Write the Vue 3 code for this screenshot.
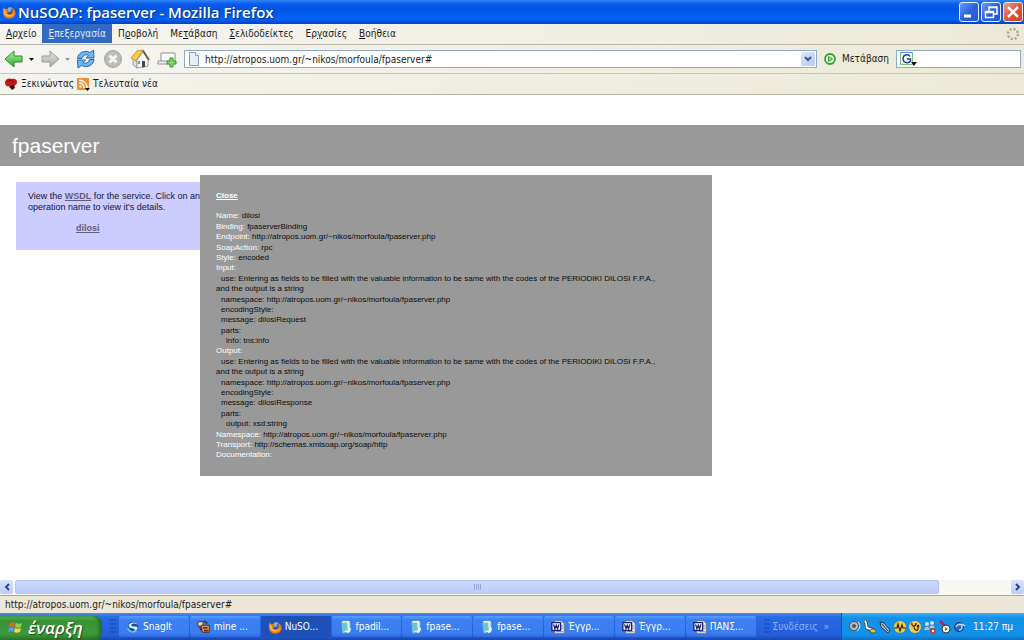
<script setup>
import { ref } from 'vue'

const address = ref('http://atropos.uom.gr/~nikos/morfoula/fpaserver#')
const query = ref('')

const menus = [
  { key: 'Α', rest: 'ρχείο' },
  { key: 'Ε', rest: 'πεξεργασία', active: true },
  { pre: 'Π', key: 'ρ', rest: 'οβολή' },
  { pre: 'Με', key: 'τ', rest: 'άβαση' },
  { key: 'Σ', rest: 'ελιδοδείκτες' },
  { pre: 'Ερ', key: 'γ', rest: 'ασίες' },
  { key: 'Β', rest: 'οήθεια' }
]

const php = 'http://atropos.uom.gr/~nikos/morfoula/fpaserver.php'
const use = 'use: Entering as fields to be filled with the valuable information to be same with the codes of the PERIODIKI DILOSI F.P.A., and the output is a string'
const details = [
  { label: 'Name:', text: 'dilosi' },
  { label: 'Binding:', text: 'fpaserverBinding' },
  { label: 'Endpoint:', text: php },
  { label: 'SoapAction:', text: 'rpc' },
  { label: 'Style:', text: 'encoded' },
  { label: 'Input:' },
  { text: use, level: 1 },
  { text: 'namespace: ' + php, level: 1 },
  { text: 'encodingStyle:', level: 1 },
  { text: 'message: dilosiRequest', level: 1 },
  { text: 'parts:', level: 1 },
  { text: 'info: tns:info', level: 2 },
  { label: 'Output:' },
  { text: use, level: 1 },
  { text: 'namespace: ' + php, level: 1 },
  { text: 'encodingStyle:', level: 1 },
  { text: 'message: dilosiResponse', level: 1 },
  { text: 'parts:', level: 1 },
  { text: 'output: xsd:string', level: 2 },
  { label: 'Namespace:', text: php },
  { label: 'Transport:', text: 'http://schemas.xmlsoap.org/soap/http' },
  { label: 'Documentation:' }
]

const tasks = [
  { name: 'SnagIt', icon: 'snag' },
  { name: 'mine ...', icon: 'mine' },
  { name: 'NuSO...', icon: 'fox', active: true },
  { name: 'fpadil...', icon: 'note' },
  { name: 'fpase...', icon: 'note' },
  { name: 'fpase...', icon: 'note' },
  { name: 'Έγγρ...', icon: 'word' },
  { name: 'Έγγρ...', icon: 'word' },
  { name: 'ΠΑΝΣ...', icon: 'word' }
]
</script>

<template>
  <div class="window">
    <svg class="defs" width="0" height="0" aria-hidden="true">
      <defs>
        <linearGradient id="gGreen" x1="0" y1="0" x2="0" y2="1"><stop offset="0" stop-color="#b6f3a0" /><stop offset="1" stop-color="#2fa52c" /></linearGradient>
        <linearGradient id="gGray" x1="0" y1="0" x2="0" y2="1"><stop offset="0" stop-color="#e2e2de" /><stop offset="1" stop-color="#a9a9a6" /></linearGradient>
        <symbol id="fox" viewBox="0 0 16 16">
          <circle cx="8.500" cy="7.500" r="5.500" fill="#2c4f9e" />
          <path d="M7 3c2-1 4-.5 5 1l-2 1 1 2-3 1-2-2z" fill="#7fb4e6" />
          <path d="M2 2c0 2 .5 2 1.500 2.500C5 4 6 4 7 5L5.500 6.500c1 0 1.500 1 2.500 1.500-1 1.500-2 1-3 .5 1 3 6 3 7-.5.7-2.500-.5-4-1.500-5 3 .5 5 3 5 6 0 4-3.500 6.500-7 6.500-4.500 0-7.500-3-7.500-7C1 6 1 4 2 2z" fill="#ef7c17" />
          <path d="M2 5c-.5 5 2 8.500 6.500 8.500 2.500 0 5-1.500 6-4-2 2-5 3-7.500 1.500C5 10 4 8 4 6z" fill="#f9b83c" />
        </symbol>
        <symbol id="snag" viewBox="0 0 16 16">
          <circle cx="8" cy="8" r="6" fill="#1a4f96" />
          <path d="M3 6c2-4 8-4 10-1-3-1.500-7-1-7 1s5 1 7 2c1 3-3 6-6 6 3-1 4-3 2-4-2-.8-6-.5-6-4z" fill="#dff1ff" />
          <path d="M2 9c1 4 6 6 10 3" fill="none" stroke="#62c2ef" stroke-width="2" />
        </symbol>
        <symbol id="mine" viewBox="0 0 16 16">
          <path d="M1 2h6v5H1z" fill="#f6d4a0" stroke="#3b2a2a" />
          <path d="M5 6h9v8H6z" fill="#e59a4a" stroke="#3b2a2a" />
          <path d="M7 8h5v2H7zM8 11h5v2H8z" fill="#722d1c" />
          <path d="M8 1l4 3M3 8l2 4" stroke="#3b2a2a" stroke-width="1.500" />
        </symbol>
        <symbol id="note" viewBox="0 0 16 16">
          <path d="M3 2l8-1 2 2v11l-9 1z" fill="#c8f0f4" stroke="#4d91b5" />
          <path d="M3 3l6-1 1 9-6 3z" fill="#6ec3cf" />
          <path d="M4 2h8" stroke="#f1f6d0" stroke-width="2" />
          <path d="M11 8l3 2-2 4-3 1z" fill="#e9f8fb" />
        </symbol>
        <symbol id="word" viewBox="0 0 16 16">
          <path d="M4 1h8l3 3v11H4z" fill="#fff" stroke="#777" />
          <path d="M11 6h3M11 8h3M11 10h3M6 13h8" stroke="#8c8cb4" />
          <path d="M1 3h10v9H1z" fill="#fff" stroke="#1d2376" stroke-width="1.500" />
          <path d="M3 5l1.500 5L6 6l1.500 4L9 5" fill="none" stroke="#1d2376" stroke-width="1.500" />
        </symbol>
      </defs>
    </svg>

    <header class="titlebar">
      <svg width="14" height="14"><use href="#fox" /></svg>
      <h1>NuSOAP: fpaserver - Mozilla Firefox</h1>
      <div class="controls">
        <button type="button" aria-label="Minimize">
          <svg viewBox="0 0 18 18"><path d="M4 13h7" stroke="#fff" stroke-width="3" /></svg>
        </button>
        <button type="button" aria-label="Restore">
          <svg viewBox="0 0 18 18" fill="none" stroke="#fff"><path d="M7 8V4h8v7h-3M7 4.500h8" stroke-width="1.500" /><path d="M3.500 8.500h8v6h-8zM3.500 9.500h8" stroke-width="1.500" /></svg>
        </button>
        <button type="button" class="close" aria-label="Close window">
          <svg viewBox="0 0 18 18"><path d="M4 4l10 10M14 4L4 14" stroke="#fff" stroke-width="2.500" /></svg>
        </button>
      </div>
    </header>

    <nav class="menubar">
      <button v-for="m in menus" :key="m.rest" type="button" :class="{ active: m.active }">{{ m.pre }}<u>{{ m.key }}</u>{{ m.rest }}</button>
      <svg class="throbber" width="14" height="14" viewBox="0 0 14 14"><circle cx="7" cy="7" r="5" fill="none" stroke="#aaa9a2" stroke-width="2.500" stroke-dasharray="2.200 1.700" /></svg>
    </nav>

    <div class="toolbar">
      <button type="button" aria-label="Back"><svg width="20" height="20" viewBox="0 0 20 20"><path d="M1 10l9-8v5h8v6h-8v5z" fill="url(#gGreen)" stroke="#2c8a2a" stroke-linejoin="round" /></svg></button>
      <button type="button" class="caret" aria-label="Back history"><svg width="5" height="3" viewBox="0 0 5 3"><path d="M0 0h5L2.500 3z" fill="#111" /></svg></button>
      <button type="button" aria-label="Forward"><svg width="20" height="20" viewBox="0 0 20 20"><path d="M19 10l-9-8v5H2v6h8v5z" fill="url(#gGray)" stroke="#9b9b98" stroke-linejoin="round" /></svg></button>
      <button type="button" class="caret" aria-label="Forward history"><svg width="5" height="3" viewBox="0 0 5 3"><path d="M0 0h5L2.500 3z" fill="#999" /></svg></button>
      <button type="button" aria-label="Reload"><svg width="20" height="20" viewBox="0 0 20 20"><path d="M1.500 9.500C2 4 8 .5 14 3.500L17.500 1l.5 8h-8l2.500-2.500C10 5 7 6 6 9.500z" fill="#6db6ef" stroke="#2368ad" stroke-linejoin="round" /><path d="M18 10.500c-.5 5.500-6.500 9-12.500 6L2 19l-.5-8h8L7 13.500c2.500 1.500 5.500.5 6.500-3z" fill="#6db6ef" stroke="#2368ad" stroke-linejoin="round" /></svg></button>
      <button type="button" aria-label="Stop"><svg width="20" height="20" viewBox="0 0 20 20"><circle cx="10" cy="10" r="8.500" fill="#bcbcb9" stroke="#a4a4a1" /><path d="M6.500 6.500l7 7M13.500 6.500l-7 7" stroke="#f5f5f2" stroke-width="3" /></svg></button>
      <button type="button" aria-label="Home"><svg width="20" height="20" viewBox="0 0 20 20"><path d="M3 10l4 1v8l-4-3z" fill="#d9dde3" stroke="#8a8a86" stroke-width=".8" /><path d="M7 11l6-8 5 8v6l-11 2z" fill="#fafafa" stroke="#8a8a86" stroke-width=".8" /><path d="M1 9l6-7 6-1-7 11z" fill="#fbcd45" stroke="#b8862a" stroke-width=".8" stroke-linejoin="round" /><path d="M13 1.500l6 9.500" stroke="#6e5434" stroke-width="1.600" /><path d="M12 12h3v6l-3 .5z" fill="#3c4a5c" /><path d="M8 12h2v3H8z" fill="#6f9bd0" /></svg></button>
      <button type="button" aria-label="New tab"><svg width="20" height="20" viewBox="0 0 20 20"><path d="M4 4h14v9H4z" fill="#fbfbf9" stroke="#909294" /><path d="M1 12h12v3H1z" fill="#eef0f1" stroke="#909294" /><path d="M13 9h3v3h3v3h-3v3h-3v-3h-3v-3h3z" fill="#7ddb62" stroke="#36952c" /></svg></button>
      <div class="field url">
        <svg width="12" height="14" viewBox="0 0 12 14"><path d="M1.500.5h6l3 3v10h-9z" fill="#e4effc" stroke="#7fa0c8" /><path d="M7.500.5v3h3" fill="#fff" stroke="#7fa0c8" /></svg>
        <input v-model="address" type="text" aria-label="Address">
        <button type="button" class="drop" aria-label="Show history"><svg width="8" height="6" viewBox="0 0 8 6"><path d="M1 1l3 3 3-3" fill="none" stroke="#3d5688" stroke-width="2" /></svg></button>
      </div>
      <button type="button" class="go">
        <svg width="12" height="12" viewBox="0 0 12 12"><circle cx="6" cy="6" r="5" fill="#e8fbe2" stroke="#35a02f" stroke-width="1.800" /><path d="M4.500 3.500L8.500 6l-4 2.500z" fill="#9be27f" stroke="#35a02f" /></svg>
        Μετάβαση
      </button>
      <div class="field search">
        <svg width="17" height="15" viewBox="0 0 17 15"><path d="M.5.5h12v12H.5z" fill="#fff" stroke="#79c079" /><path d="M.5.5h12" stroke="#5b86d8" /><path d="M10 4.500C9 2 3.500 1.500 3 6.500c0 5 6 5 7.500 2.500V7H7" fill="none" stroke="#223f98" stroke-width="1.500" /><path d="M11 10h6l-3 4z" fill="#111" /></svg>
        <input v-model="query" type="text" aria-label="Search Google">
      </div>
    </div>

    <nav class="bookmarks">
      <a href="#"><svg width="14" height="14" viewBox="0 0 14 14"><path d="M1 5c1-4 5-4 7-3 3-1 5 1 5 3 0 3-2 3-3 4l-1 3-3-1-1-2C2 10 1 8 1 5z" fill="#c9161c" /><path d="M5 9l5-1 1 3-3 2z" fill="#4a0b0b" /><path d="M3 5l4-2 3 2" stroke="#7e0c10" fill="none" /></svg>Ξεκινώντας</a>
      <a href="#"><svg width="13" height="13" viewBox="0 0 13 13"><rect width="12" height="12" rx="1" fill="#ee8f2c" /><circle cx="3.500" cy="8.500" r="1.300" fill="#fff" /><path d="M2 5c3 0 5 2 5 5M2 2.200c5 0 8 3.300 8 7.800" fill="none" stroke="#fff" stroke-width="1.500" /><path d="M8 10h5l-2.500 3z" fill="#111" /></svg>Τελευταία νέα</a>
    </nav>

    <main class="page">
      <h2>fpaserver</h2>
      <div class="canvas">
        <section class="intro">
          <p>View the <a href="#">WSDL</a> for the service. Click on an operation name to view it's details.</p>
          <ul><li><a href="#">dilosi</a></li></ul>
        </section>
        <section class="details">
          <a href="#">Close</a>
          <ul>
            <li v-for="(d, i) in details" :key="i" :class="'level' + (d.level || 0)"><span v-if="d.label">{{ d.label }}</span> {{ d.text }}</li>
          </ul>
        </section>
      </div>
    </main>

    <div class="scroll">
      <button type="button" aria-label="Scroll left"><svg width="6" height="8" viewBox="0 0 6 8"><path d="M5 1L2 4l3 3" fill="none" stroke="#33487c" stroke-width="2" /></svg></button>
      <div class="track"><div class="thumb"><i></i><i></i><i></i><i></i></div></div>
      <button type="button" aria-label="Scroll right"><svg width="6" height="8" viewBox="0 0 6 8"><path d="M1 1l3 3-3 3" fill="none" stroke="#33487c" stroke-width="2" /></svg></button>
    </div>
    <div class="status">http://atropos.uom.gr/~nikos/morfoula/fpaserver#</div>

    <footer class="taskbar">
      <button type="button" class="start">
        <svg width="16" height="16" viewBox="0 0 16 16"><path d="M2 3c2-1 3-1 5 0L6 7C4 6 3 6 1 7z" fill="#ee5a35" /><path d="M8 3c2 1 4 1 6 0l-1 4c-2 1-4 1-6 0z" fill="#8ed04a" /><path d="M1 8c2-1 3-1 5 0l-1 4c-2-1-3-1-5 0z" fill="#5e95f4" /><path d="M7 8c2 1 4 1 6 0l-1 4c-2 1-4 1-6 0z" fill="#fbd13c" /></svg>
        έναρξη
      </button>
      <span class="grip"></span>
      <div class="tasks">
        <button v-for="(t, i) in tasks" :key="i" type="button" :class="{ active: t.active }">
          <svg width="14" height="14"><use :href="'#' + t.icon" /></svg>{{ t.name }}
        </button>
      </div>
      <span class="grip"></span>
      <div class="links">Συνδέσεις <span>»</span></div>
      <div class="tray">
        <svg width="12" height="14" viewBox="0 0 12 14"><circle cx="5" cy="6" r="4.500" fill="#bdbdbd" stroke="#555" /><circle cx="5" cy="6" r="2" fill="#555" /><path d="M9 2c3 3 2 7-1 9" fill="none" stroke="#eee" /></svg>
        <svg width="12" height="14" viewBox="0 0 12 14"><path d="M1 1c2 2 1 5 2 7l6 2" fill="none" stroke="#333" stroke-width="3.500" /><path d="M1 1c2 2 1 5 2 7l6 2" fill="none" stroke="#fff" stroke-width="2" /><ellipse cx="9" cy="11" rx="3" ry="2" fill="#e6c648" stroke="#333" stroke-width=".7" /></svg>
        <svg width="12" height="14" viewBox="0 0 12 14"><path d="M1 2l4 1 6 7-2 3-7-6z" fill="#a9bdc9" stroke="#243b55" /><path d="M3 4l6 7" stroke="#243b55" /></svg>
        <svg width="12" height="14" viewBox="0 0 12 14"><circle cx="6" cy="7" r="6" fill="#fbc93a" /><path d="M0 8h3l1-4 2 7 2-6 1 3h3" fill="none" stroke="#222" stroke-width="1.200" /></svg>
        <svg width="12" height="14" viewBox="0 0 12 14"><circle cx="6" cy="7" r="6" fill="#fbc93a" /><path d="M3 3c-1 4 4 4 4 0M5 6c0 5 5 6 4 1" fill="none" stroke="#222" stroke-width="1.200" /><circle cx="9" cy="6" r="1.300" fill="#222" /></svg>
        <svg width="12" height="14" viewBox="0 0 12 14"><circle cx="3" cy="4" r="2" fill="#cfe6ee" /><circle cx="8" cy="3" r="2" fill="#cfe6ee" /><path d="M0 10c0-5 6-5 6 0M5 8c0-4 6-4 6 0" fill="#a8cadb" stroke="#456" stroke-width=".5" /><circle cx="9" cy="11" r="3" fill="#dd3c28" /><path d="M8 10l2 2M10 10l-2 2" stroke="#fff" /></svg>
        <svg width="12" height="14" viewBox="0 0 12 14"><path d="M1 1l5 5" stroke="#b02060" stroke-width="2.500" /><circle cx="7" cy="9" r="4" fill="#f4f4f4" stroke="#333" /><path d="M6 7l3 2-3 2z" fill="#1c9b30" /></svg>
        <svg width="12" height="14" viewBox="0 0 12 14"><circle cx="5" cy="7" r="4.500" fill="#2d62b8" stroke="#16345f" /><path d="M2 7c2-4 7-3 9-1M5 10c3 0 4-3 2-5" fill="none" stroke="#bcd9f7" stroke-width="1.300" /></svg>
        <time>11:27 πμ</time>
      </div>
    </footer>
  </div>
</template>

<style>
body {
  margin: 0;
  background: #fefefe;
}
</style>

<style scoped>
.window {
  display: flex;
  flex-direction: column;
  min-height: 100vh;
  background: #fefefe;
  color: #1c1c1c;
  font: 10px/14px "DejaVu Sans Condensed", "Noto Sans", sans-serif;
}
.defs { position: absolute; }
svg { display: block; flex: none; }
button {
  display: flex;
  align-items: center;
  padding: 0;
  border: 0;
  background: none;
  color: inherit;
  font: inherit;
  white-space: nowrap;
}
h1, h2, p, ul { margin: 0; padding: 0; }
ul { list-style: none; }

.titlebar {
  display: flex;
  align-items: center;
  height: 24px;
  padding: 0 1px 0 2px;
  background: linear-gradient(#2f86f7 0, #0a5cea 4px, #0054e3 10px, #0563fa 19px, #0450d8 22px, #0340bd);
  color: #fff;
}
.titlebar h1 {
  flex: 1;
  margin-left: 2px;
  font: 600 15px/20px "Open Sans", sans-serif;
  text-shadow: 1px 1px 1px #0a2f86;
}
.controls { display: flex; gap: 2px; }
.controls button {
  box-sizing: border-box;
  width: 20px;
  height: 20px;
  border: 1px solid #e8effc;
  border-radius: 3px;
  background: linear-gradient(135deg, #6f9bf2, #2b62e0 50%, #2256d4);
}
.controls .close { background: linear-gradient(135deg, #f0a088, #e0553a 50%, #d0401c); }
.controls svg { width: 18px; height: 18px; }

.menubar {
  display: flex;
  height: 20px;
  padding-right: 4px;
  border-bottom: 1px solid #b9b7a6;
  background: linear-gradient(90deg, #f6f5f2, #ece9d8);
}
.menubar button { height: 19px; padding: 1px 6px 0; }
.menubar .active { background: #316ac5; color: #dfe9fb; }
.throbber { margin: 3px 0 0 auto; }

.toolbar {
  display: flex;
  align-items: center;
  height: 28px;
  padding: 0 3px 0 4px;
  border-bottom: 1px solid #c9c6b6;
  background: linear-gradient(90deg, #f6f5f2, #ece9d8);
}
.toolbar > button { margin-right: 7px; }
.toolbar > .caret { margin-right: 6px; margin-left: -2px; }
.field {
  box-sizing: border-box;
  display: flex;
  align-items: center;
  height: 18px;
  border: 1px solid #8fa9c8;
  background: #fff;
}
.field input {
  flex: 1;
  min-width: 0;
  padding: 1px 0 0;
  border: 0;
  outline: 0;
  background: none;
  color: inherit;
  font: inherit;
}
.url { flex: 1; padding-left: 3px; }
.url input { margin-left: 5px; }
.drop {
  justify-content: center;
  width: 14px;
  height: 14px;
  margin-right: 1px;
  border-radius: 2px;
  background: linear-gradient(135deg, #dfe8fe, #b4c7f5);
}
.toolbar > .go { gap: 6px; margin: 0 7px; }
.search { width: 125px; padding-left: 3px; }

.bookmarks {
  display: flex;
  align-items: center;
  gap: 3px;
  height: 20px;
  padding-left: 4px;
  border-bottom: 1px solid #b9b7a6;
  background: linear-gradient(90deg, #f4f3ee, #ece9d8);
}
.bookmarks a {
  display: flex;
  align-items: center;
  gap: 3px;
  color: inherit;
  text-decoration: none;
}

.page {
  flex: 1;
  padding-top: 30px;
  font-family: "Liberation Sans", Arial, sans-serif;
}
.page h2 {
  padding: 9px 12px 8px;
  background: #999;
  color: #fff;
  font-size: 21px;
  line-height: 24px;
  font-weight: normal;
}
.canvas { display: flex; align-items: flex-start; padding-top: 9px; }
.intro {
  box-sizing: border-box;
  flex: none;
  width: 184px;
  margin: 7px 0 0 16px;
  padding: 9px 0 16px 12px;
  background: #ccf;
  color: #14143c;
  font-size: 9px;
  line-height: 11px;
}
.intro a { color: #5e5e7c; font-weight: bold; }
.intro ul { padding: 10px 0 0 48px; }
.details {
  flex: 0 1 512px;
  box-sizing: border-box;
  padding: 16px 46px 15px 16px;
  background: #999;
  color: #0c0c0c;
  font-size: 8px;
  line-height: 1.3;
}
.details a { color: #fff; font-weight: bold; }
.details ul { padding-top: 10px; }
.details span { color: #fff; }
.level1 { text-indent: 5px; }
.level2 { text-indent: 10px; }

.scroll {
  display: flex;
  height: 15px;
  border-bottom: 1px solid #a9a89c;
  background: #f8f7f2;
}
.scroll button {
  justify-content: center;
  width: 13px;
  height: 14px;
  border-radius: 2px;
  background: linear-gradient(#d7e2fe, #bccdf8);
}
.track { flex: 1; margin: 0 2px; }
.thumb {
  box-sizing: border-box;
  display: flex;
  align-items: center;
  justify-content: center;
  gap: 1px;
  width: 93%;
  height: 14px;
  border: 1px solid #b4c6f2;
  border-radius: 2px;
  background: linear-gradient(#cbd8fd, #bdccf8);
}
.thumb i { width: 1px; height: 6px; background: #93a8e0; }

.status {
  height: 17px;
  padding-left: 5px;
  background: #ece7d8;
  line-height: 17px;
}

.taskbar {
  display: flex;
  align-items: center;
  height: 27px;
  background: linear-gradient(#4a90f0 0, #2a6ae4 4px, #245edb 22px, #1b47b0);
  color: #fff;
}
.start {
  gap: 4px;
  width: 102px;
  height: 24px;
  align-self: flex-end;
  padding-left: 8px;
  border-radius: 0 8px 8px 0;
  background: linear-gradient(#5bb55a, #379237 5px, #3c9a3b 18px, #2a7429);
  box-shadow: inset -3px 0 3px #256f25;
  font: italic 600 17px/22px "Open Sans", sans-serif;
  text-shadow: 1px 1px 1px #1c4a1c;
}
.grip {
  width: 6px;
  height: 16px;
  margin: 0 3px 0 8px;
  background: repeating-linear-gradient(#1a49b4 0 2px, transparent 2px 4px);
  opacity: 0.6;
}
.tasks {
  flex: 1;
  display: grid;
  grid-template-columns: repeat(9, 1fr);
  gap: 1px;
}
.tasks button {
  gap: 3px;
  min-width: 0;
  height: 21px;
  padding: 1px 0 0 7px;
  border-radius: 2px;
  background: linear-gradient(#5a9bff, #3a80f5 4px, #3a7df0 17px, #2f6be0);
}
.tasks .active { background: #1e50b8; }
.links { margin-right: 12px; color: #8fb2f5; }
.links span { margin-left: 3px; }
.tray {
  display: flex;
  align-items: center;
  gap: 3px;
  height: 27px;
  padding: 0 11px 0 7px;
  border-left: 1px solid #1551b5;
  background: linear-gradient(#3bb0f8, #1490e8 5px, #1290e8 22px, #0f70c0);
}
.tray time { margin-left: 4px; }
</style>
